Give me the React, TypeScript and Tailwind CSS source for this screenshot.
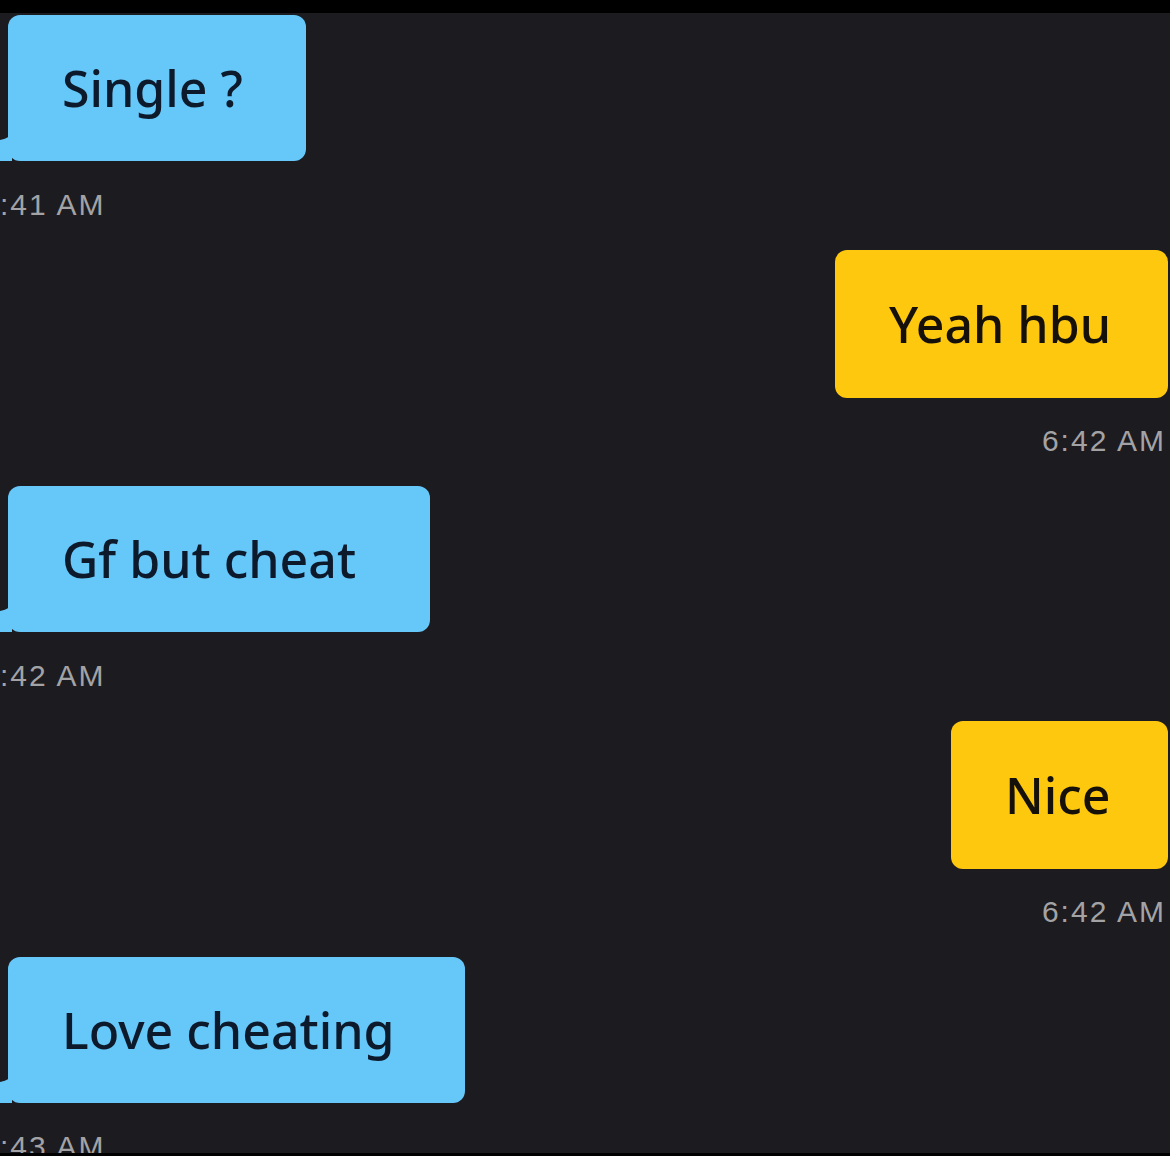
import React from 'react'

interface Message {
  id: number
  from: 'them' | 'me'
  text: string
  time: string
  width: number
}

const messages: Message[] = [
  { id: 1, from: 'them', text: 'Single ?', time: ':41 AM', width: 298 },
  { id: 2, from: 'me', text: 'Yeah hbu', time: '6:42 AM', width: 333 },
  { id: 3, from: 'them', text: 'Gf but cheat', time: ':42 AM', width: 422 },
  { id: 4, from: 'me', text: 'Nice', time: '6:42 AM', width: 217 },
  { id: 5, from: 'them', text: 'Love cheating', time: ':43 AM', width: 457 },
]

function TheirBubble({ msg }: { msg: Message }) {
  return (
    <div className="flex flex-col items-start">
      <div
        className="relative ml-[8px] h-[146px] rounded-[12px] bg-[#66c7f9] pl-[54px] flex items-center"
        style={{ width: msg.width }}
      >
        {/* tail */}
        <svg className="absolute left-[-8px] bottom-0" width="12" height="30" viewBox="0 0 12 30">
          <path d="M12 0 Q11 7 0 9 L0 30 L12 30 Z" fill="#66c7f9" />
        </svg>
        <span className="text-[50px] font-medium leading-none text-[#0c1a2b]">{msg.text}</span>
      </div>
      <div className="timestamp mt-[28px] h-[32px] leading-[32px] text-[30px] tracking-[2px] text-[#a3a3a6]">
        {msg.time}
      </div>
    </div>
  )
}

function MyBubble({ msg }: { msg: Message }) {
  return (
    <div className="flex flex-col items-end">
      <div
        className="mr-[2px] h-[148px] rounded-[12px] bg-[#fec80f] pl-[54px] flex items-center"
        style={{ width: msg.width }}
      >
        <span className="text-[50px] font-medium leading-none text-[#15110a]">{msg.text}</span>
      </div>
      <div className="timestamp mt-[27px] mr-[4px] h-[32px] leading-[32px] text-[30px] tracking-[2px] text-[#a3a3a6]">
        {msg.time}
      </div>
    </div>
  )
}

export default function App() {
  return (
    <div className="w-[1170px] h-[1156px] bg-black overflow-hidden" style={{ fontFamily: '"Noto Sans", "Open Sans", Arial, sans-serif' }}>
      <style>{`.timestamp { font-family: "Liberation Sans", Arial, sans-serif; }`}</style>
      <div className="mt-[13px] h-[1140px] overflow-hidden bg-[#1c1b1f] pt-[2px]">
        <div className="flex flex-col gap-[29px]">
          {messages.map(m =>
            m.from === 'them' ? <TheirBubble key={m.id} msg={m} /> : <MyBubble key={m.id} msg={m} />
          )}
        </div>
      </div>
    </div>
  )
}
